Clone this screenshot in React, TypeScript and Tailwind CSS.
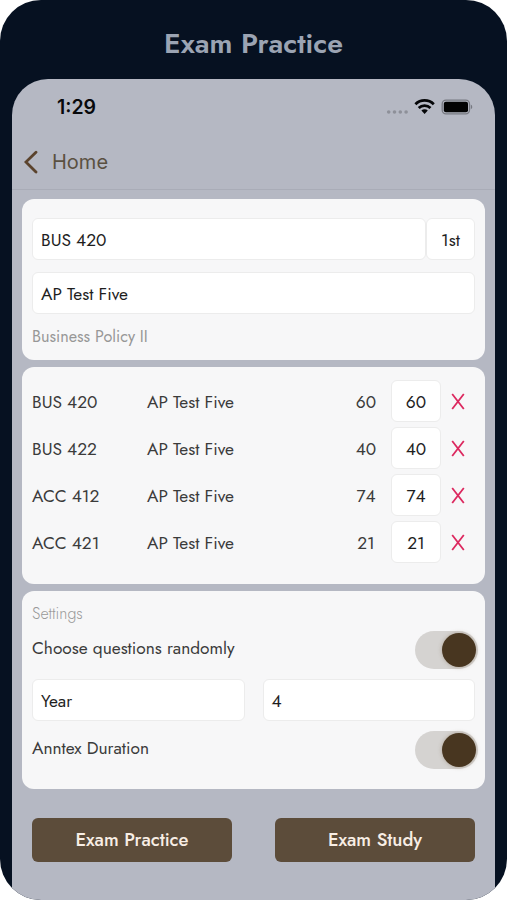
import React from "react";

const exams = [
  { code: "BUS 420", title: "AP Test Five", count: 60 },
  { code: "BUS 422", title: "AP Test Five", count: 40 },
  { code: "ACC 412", title: "AP Test Five", count: 74 },
  { code: "ACC 421", title: "AP Test Five", count: 21 },
];

function Field({ children, className = "" }: { children: React.ReactNode; className?: string }) {
  return (
    <div className={`flex h-[42px] items-center rounded-[6px] border border-[#ececec] bg-white px-2 pt-px text-[17.3px] text-[#1e1e1e] ${className}`}>
      {children}
    </div>
  );
}

function Toggle() {
  return (
    <div className="flex h-[38px] w-[63px] shrink-0 items-center justify-end rounded-full bg-[#d5d3d1] pr-[2px]">
      <div className="size-[34px] rounded-full bg-[#483620] shadow-[0_0_4px_rgba(100,75,40,0.35)]" />
    </div>
  );
}

function StatusIcons() {
  return (
    <svg width="87" height="18" viewBox="0 0 87 18" fill="none">
      <g fill="#8e9099">
        <circle cx="2.7" cy="14" r="1.8" />
        <circle cx="8.5" cy="14" r="1.8" />
        <circle cx="14.3" cy="14" r="1.8" />
        <circle cx="20.1" cy="14" r="1.8" />
      </g>
      <g stroke="#050608" strokeWidth="2.8">
        <path d="M29.4 6.2A13.2 13.2 0 0 1 47.8 6.2" />
        <path d="M32.7 9.9A8.6 8.6 0 0 1 44.5 9.9" />
      </g>
      <path d="M35.4 12.6A4.6 4.6 0 0 1 41.8 12.6L38.6 15.9Z" fill="#050608" />
      <rect x="56.2" y="2.2" width="27.3" height="13.6" rx="3.8" stroke="#777981" strokeWidth="1.3" />
      <rect x="57.8" y="3.8" width="24.2" height="10.4" rx="2" fill="#030303" />
      <path d="M84.8 6.8C86.7 7.4 86.7 10.6 84.8 11.2Z" fill="#777981" />
    </svg>
  );
}

export default function App() {
  return (
    <main className="h-[900px] w-[507px] overflow-hidden rounded-[41px] bg-[#061121] px-3 font-['Jost','Lato',sans-serif] text-[#3b3b3b]">
      <h1 className="flex h-[79px] items-center justify-center pt-[9px] text-[28.4px] font-semibold text-[#9ba4b3]">
        Exam Practice
      </h1>
      <section className="h-[821px] rounded-t-[36px] bg-[#b5b8c3]">
        <div className="flex h-[56px] items-center justify-between pr-[22px] pl-[45px]">
          <span className="pt-px font-['Inter',sans-serif] text-[19.5px] font-semibold text-[#08090b]">1:29</span>
          <StatusIcons />
        </div>
        <div className="flex h-[55px] items-center gap-[13px] border-b border-[#a9acb7] pl-3">
          <svg width="15" height="24" viewBox="0 0 15 24" fill="none" stroke="#5b432d" strokeWidth="2.8" strokeLinecap="round">
            <path d="M12 2.2 1.9 12 12 22" />
          </svg>
          <span className="font-['Inter',sans-serif] text-[20px] text-[#5a5041]">Home</span>
        </div>
        <div className="flex flex-col gap-[7px] px-[10px] pt-[9px]">
          <div className="h-[161px] rounded-[12px] bg-[#f7f7f8] px-[10px] pt-[19px]">
            <div className="flex">
              <Field className="flex-1">BUS 420</Field>
              <Field className="w-[49px] justify-center">1st</Field>
            </div>
            <Field className="mt-3">AP Test Five</Field>
            <div className="mt-[11px] text-[16.2px] leading-6 text-[#979797]">Business Policy II</div>
          </div>
          <div className="flex h-[217px] flex-col gap-[5px] rounded-[12px] bg-[#f7f7f8] px-[10px] pt-[13px]">
            {exams.map((exam) => (
              <div key={exam.code} className="flex h-[42px] items-center text-[17.3px]">
                <span className="w-[115px] pt-px">{exam.code}</span>
                <span className="pt-px">{exam.title}</span>
                <span className="ml-auto w-[34px] pt-px text-center">{exam.count}</span>
                <Field className="ml-[8px] w-[50px] justify-center">{exam.count}</Field>
                <svg className="mr-[10px] ml-[10px]" width="14" height="17" viewBox="0 0 14 17" fill="none" stroke="#dc285f" strokeWidth="1.8">
                  <path d="M1.2 1 12.8 16M12.8 1 1.2 16" />
                </svg>
              </div>
            ))}
          </div>
          <div className="h-[198px] rounded-[12px] bg-[#f7f7f8] px-[10px] pt-[10px]">
            <div className="h-[24px] pt-px text-[16px] leading-6 font-light text-[#999999]">Settings</div>
            <div className="-mr-[3px] flex h-[50px] items-center justify-between text-[17.3px]">
              <span className="pb-[4px]">Choose questions randomly</span>
              <Toggle />
            </div>
            <div className="mt-1 grid grid-cols-2 gap-[18px]">
              <Field>Year</Field>
              <Field>4</Field>
            </div>
            <div className="-mr-[3px] flex h-[58px] items-center justify-between text-[17.3px]">
              <span className="pb-[4px]">Anntex Duration</span>
              <Toggle />
            </div>
          </div>
        </div>
        <div className="mt-[29px] grid grid-cols-2 gap-[43px] px-5 text-[18.5px] text-[#f8eee5]">
          <button className="h-[44px] rounded-[6px] bg-[#5c4c3a] font-medium">Exam Practice</button>
          <button className="h-[44px] rounded-[6px] bg-[#5c4c3a] font-medium">Exam Study</button>
        </div>
      </section>
    </main>
  );
}
